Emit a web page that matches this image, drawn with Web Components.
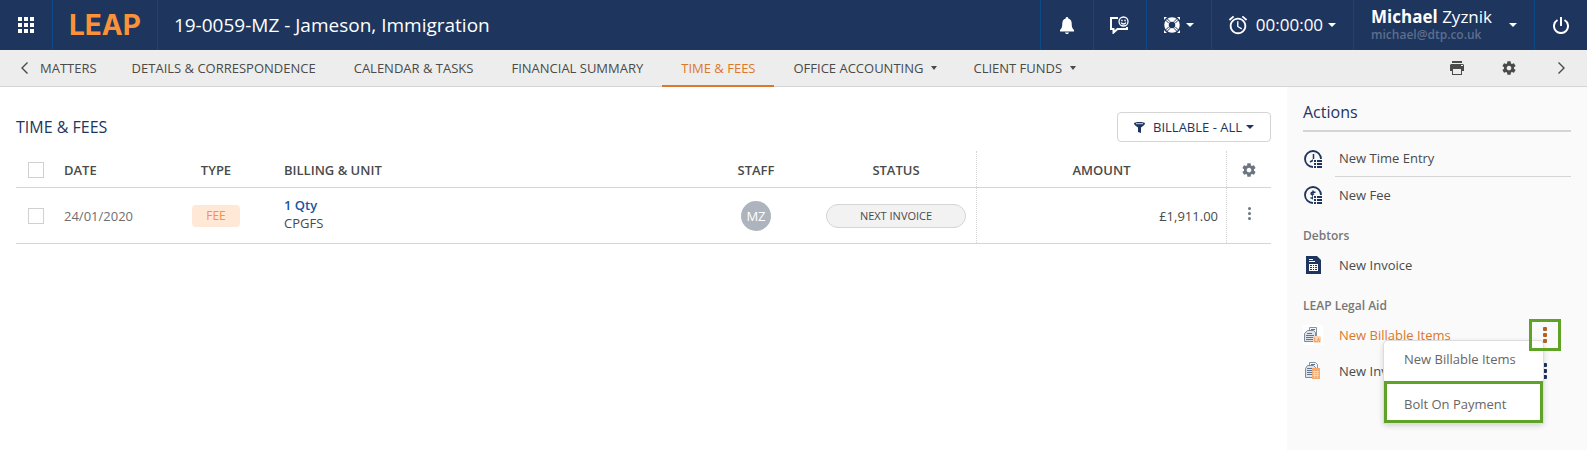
<!DOCTYPE html>
<html lang="en">
<head>
<meta charset="utf-8">
<title>19-0059-MZ - Jameson, Immigration</title>
<style>
:root {
  --navy: #1e355e;
  --orange: #dd772b;
  --line: #d5d5d5;
  --green: #5fa326;
  --text: #4a4a4a;
}

body {
  margin: 0;
  min-height: 100vh;
  display: flex;
  flex-direction: column;
  background: #fff;
  color: var(--text);
  font: 13px/20px "Open Sans", "Noto Sans", sans-serif;
}

.page {
  flex: 1;
  display: flex;
}

time-fees {
  flex: 1;
  min-width: 0;
}
</style>
</head>
<body>
<app-header matter="19-0059-MZ - Jameson, Immigration"></app-header>
<app-nav>
  <nav-tab>DETAILS &amp; CORRESPONDENCE</nav-tab>
  <nav-tab>CALENDAR &amp; TASKS</nav-tab>
  <nav-tab>FINANCIAL SUMMARY</nav-tab>
  <nav-tab active>TIME &amp; FEES</nav-tab>
  <nav-tab menu>OFFICE ACCOUNTING</nav-tab>
  <nav-tab menu>CLIENT FUNDS</nav-tab>
</app-nav>
<div class="page">
  <time-fees></time-fees>
  <actions-panel>
    <action-item icon="time" divider>New Time Entry</action-item>
    <action-item icon="fee">New Fee</action-item>
    <action-group>Debtors</action-group>
    <action-item icon="invoice">New Invoice</action-item>
    <action-group>LEAP Legal Aid</action-group>
    <action-item icon="aidItems" more active>New Billable Items
      <popup-menu slot="menu"></popup-menu>
    </action-item>
    <action-item icon="aidInvoice" more>New Invoice</action-item>
  </actions-panel>
</div>

<script>
const gear = `<path fill="currentColor" d="M19.43 12.98c.04-.32.07-.64.07-.98s-.03-.66-.07-.98l2.11-1.65c.19-.15.24-.42.12-.64l-2-3.46c-.12-.22-.39-.3-.61-.22l-2.49 1c-.52-.4-1.08-.73-1.69-.98l-.38-2.65C14.46 2.18 14.25 2 14 2h-4c-.25 0-.46.18-.49.42l-.38 2.65c-.61.25-1.17.59-1.69.98l-2.49-1c-.23-.09-.49 0-.61.22l-2 3.46c-.13.22-.07.49.12.64l2.11 1.65c-.04.32-.07.65-.07.98s.03.66.07.98l-2.11 1.65c-.19.15-.24.42-.12.64l2 3.46c.12.22.39.3.61.22l2.49-1c.52.4 1.08.73 1.69.98l.38 2.65c.03.24.24.42.49.42h4c.25 0 .46-.18.49-.42l.38-2.65c.61-.25 1.17-.59 1.69-.98l2.49 1c.23.09.49 0 .61-.22l2-3.46c.12-.22.07-.49-.12-.64l-2.11-1.65zM12 15.5c-1.93 0-3.5-1.57-3.5-3.5s1.57-3.5 3.5-3.5 3.5 1.57 3.5 3.5-1.57 3.5-3.5 3.5z"/>`;

// the little list in the corner of the time and fee icons
const list = `<path fill="#fafafa" d="M9 9h10v10H9z"/><path fill="currentColor" d="M10 10h2v2h-2zm3 0h5v2h-5zm-3 3h2v2h-2zm3 0h5v2h-5zm-3 3h2v2h-2zm3 0h5v2h-5z"/>`;

// name: [width, height, viewBox, markup]
const icons = {
  apps: [16, 16, "0 0 16 16", `<path fill="currentColor" d="M0 0h4v4H0zm6 0h4v4H6zm6 0h4v4h-4zM0 6h4v4H0zm6 0h4v4H6zm6 0h4v4h-4zM0 12h4v4H0zm6 0h4v4H6zm6 0h4v4h-4z"/>`],
  bell: [14, 17, "0 0 14 17", `<path fill="currentColor" d="M7 0c.8 0 1.3.6 1.3 1.4C10.7 2 11.700 4 11.700 6.500c0 3.500.6 5 2.300 6.500v1.500H0V13c1.700-1.500 2.300-3 2.300-6.500C2.300 4 3.300 2 5.700 1.400 5.700.6 6.200 0 7 0zM5 15.500h4C9 16.400 8.100 17 7 17s-2-.6-2-1.500z"/>`],
  chat: [19, 18, "0 0 19 18", `<path fill="none" stroke="currentColor" stroke-width="2" d="M8 2H1v11h2.500v3.500L7.500 13H17v-2"/><circle cx="13.500" cy="5.500" r="4.500" fill="none" stroke="currentColor" stroke-width="1.300"/><path fill="none" stroke="currentColor" stroke-width="1.300" d="M11.200 4.500h1.500M14.300 4.500h1.500M11.200 6.500c.8 2 3.800 2 4.600 0"/>`],
  help: [16, 16, "0 0 16 16", `<circle cx="8" cy="8" r="5.500" fill="none" stroke="currentColor" stroke-width="4.500"/><path stroke="#1e355e" stroke-width="1" d="M1.800 3.200l3 3M3.200 1.800l3 3M14.200 3.200l-3 3M12.800 1.800l-3 3M1.800 12.800l3-3M3.200 14.200l3-3M14.200 12.800l-3-3M12.800 14.200l-3-3"/><path fill="currentColor" d="M0 0h3L0 3zM16 0v3l-3-3zM0 16v-3l3 3zM16 16h-3l3-3z"/>`],
  alarm: [22, 22, "0 0 24 24", `<path fill="currentColor" d="M22 5.720l-4.600-3.860-1.290 1.530 4.600 3.860L22 5.720zM7.880 3.390L6.600 1.860 2 5.710l1.290 1.530 4.590-3.850zM12.500 8H11v6l4.750 2.850.75-1.230-4-2.370V8zM12 4c-4.970 0-9 4.030-9 9s4.020 9 9 9c4.970 0 9-4.030 9-9s-4.030-9-9-9zm0 16c-3.870 0-7-3.130-7-7s3.130-7 7-7 7 3.130 7 7-3.130 7-7 7z"/>`],
  power: [16, 17, "0 0 16 17", `<path fill="none" stroke="currentColor" stroke-width="2" d="M8 0v9M4.500 3A7 7 0 1 0 11.500 3"/>`],
  caret: [8, 4, "0 0 8 4", `<path fill="currentColor" d="M0 0h8L4 4z"/>`],
  smallCaret: [6, 4, "0 0 6 4", `<path fill="currentColor" d="M0 0h6L3 4z"/>`],
  back: [7, 12, "0 0 7 12", `<path fill="none" stroke="currentColor" stroke-width="1.400" d="M6.500.5L1 6l5.500 5.500"/>`],
  next: [7, 12, "0 0 7 12", `<path fill="none" stroke="currentColor" stroke-width="1.400" d="M.5.5L6 6 .5 11.500"/>`],
  print: [14, 14, "0 0 14 14", `<path fill="currentColor" d="M2 0h10v2H2zM1 3h12l1 1v6h-2V7H2v3H0V4zM2 7h10v7H2z"/><path fill="#ededed" d="M3 8h8v5H3zM11 4h2v1h-2z"/>`],
  gear: [16, 16, "0 0 24 24", gear],
  filter: [11, 11, "0 0 11 11", `<path fill="currentColor" d="M0 1.500C0 .5 2.500 0 5.500 0S11 .5 11 1.500c0 .8-1.500 2.500-4 4V11l-3-1V5.500C1.500 4 0 2.300 0 1.500z"/><path stroke="#fff" stroke-width=".8" d="M2 1.700h7"/>`],
  dots: [3, 13, "0 0 3 13", `<circle cx="1.500" cy="1.500" r="1.500" fill="currentColor"/><circle cx="1.500" cy="6.500" r="1.500" fill="currentColor"/><circle cx="1.500" cy="11.500" r="1.500" fill="currentColor"/>`],
  boldDots: [4, 16, "0 0 4 16", `<rect width="4" height="4" rx="1" fill="currentColor"/><rect y="6" width="4" height="4" rx="1" fill="currentColor"/><rect y="12" width="4" height="4" rx="1" fill="currentColor"/>`],
  time: [18, 18, "0 0 18 18", `<circle cx="9" cy="9" r="8" fill="none" stroke="currentColor" stroke-width="1.800"/><path fill="none" stroke="currentColor" stroke-width="1.500" d="M9.500 4v6L6 12"/>${list}`],
  fee: [18, 18, "0 0 18 18", `<circle cx="9" cy="9" r="8" fill="none" stroke="currentColor" stroke-width="1.800"/><path fill="none" stroke="currentColor" stroke-width="1.500" d="M11.500 6.200H8.700C6.500 6.200 6.500 9 8.700 9c2.500 0 2.500 3 .3 3H6.500M9 4.500v9"/>${list}`],
  invoice: [15, 18, "0 0 15 18", `<path fill="currentColor" d="M0 0h11l4 4v14H0z"/><path fill="#fafafa" d="M3 3h4v1H3zm0 2h6v1H3zM3 8h9v7H3z"/><path fill="currentColor" d="M4 9h2v1H4zm3 0h1v1H7zm2 0h2v1H9zm-5 2h2v1H4zm3 0h1v1H7zm2 0h2v1H9zm-5 2h2v1H4zm3 0h1v1H7zm2 0h2v1H9z"/>`],
  aidItems: [20, 20, "0 0 20 20", `<path fill="#fff" d="M0 0h20v20H0z"/><path fill="#f3f5f7" stroke="#8494aa" d="M6.500 2.500h7v12h-7z"/><path fill="#dfe4ea" stroke="#7a8ba3" d="M4.500 5.500h6l2 2v9h-11v-8z"/><path stroke="#60738f" d="M8 4.500h4M4 8.500h5M3 10.500h8M3 12.500h8M3 14.500h7"/><rect x="10" y="11" width="8" height="7" rx="2" fill="#fcd5b5"/><path fill="none" stroke="#f09a58" d="M11.700 12.500v4h2M14.500 17l1-4 1.200 4"/>`],
  aidInvoice: [20, 20, "0 0 20 20", `<path fill="#f3f5f7" stroke="#8494aa" d="M6.500 1.500h6l2 2v10h-8z"/><path fill="#dfe4ea" stroke="#7a8ba3" d="M4.500 4.500h6l2 2v10h-10v-9z"/><path stroke="#60738f" d="M8 3.500h4M4 7.500h6M4 9.500h5M4 11.500h5M4 13.500h5"/><path fill="#f5ac70" d="M9 7h8v11H9z"/><path stroke="#fde3cc" stroke-width=".7" d="M10 10.500h6M10 12.500h6M10 14.500h6M11.700 10v7M14.300 10v7"/>`]
};

class AppIcon extends HTMLElement {
  constructor() {
    super();
    this.attachShadow({ mode: "open" });
  }

  connectedCallback() {
    const [width, height, viewBox, markup] = icons[this.getAttribute("name")];
    this.shadowRoot.innerHTML = `
<style>
:host { display: inline-flex; flex: none; }
svg { display: block; }
</style>
<svg width="${width}" height="${height}" viewBox="${viewBox}" aria-hidden="true">${markup}</svg>`;
  }
}

class AppHeader extends HTMLElement {
  constructor() {
    super();
    this.attachShadow({ mode: "open" });
  }

  connectedCallback() {
    this.shadowRoot.innerHTML = `
<style>
:host {
  display: flex;
  height: 50px;
  background: var(--navy);
  color: #fff;
}

button, a, h1 {
  margin: 0;
  padding: 0 16px;
  display: flex;
  align-items: center;
  justify-content: center;
  border: 0;
  background: none;
  color: inherit;
  font: inherit;
  text-decoration: none;
}

h1 {
  flex: 1;
  justify-content: flex-start;
  font-size: 19px;
  white-space: nowrap;
}

button { border-left: 1px solid #0b4a87; }
.apps { border: 0; padding: 0 18px; }

.logo {
  border: solid #0b4a87;
  border-width: 0 1px;
  color: #fb923a;
  font: 700 28px/28px Inter, sans-serif;
}

.icon { min-width: 53px; padding: 0; }
.help { min-width: 65px; padding: 0; gap: 6px; }
.timer { padding: 0 17px 0 15px; gap: 5px; font-size: 17px; }
.timer app-icon:first-child { margin-right: 2px; }
.user { padding: 0 17px; gap: 17px; text-align: left; }
.name { display: block; font-size: 17px; line-height: 20px; }
.mail { display: block; color: #5d6e8c; font-size: 12px; font-weight: 600; line-height: 16px; }
</style>
<button class="apps" aria-label="Apps"><app-icon name="apps"></app-icon></button>
<a class="logo" href="#">LEAP</a>
<h1></h1>
<button class="icon" aria-label="Notifications"><app-icon name="bell"></app-icon></button>
<button class="icon" aria-label="Feedback"><app-icon name="chat"></app-icon></button>
<button class="help" aria-label="Help"><app-icon name="help"></app-icon><app-icon name="caret"></app-icon></button>
<button class="timer"><app-icon name="alarm"></app-icon>00:00:00<app-icon name="caret"></app-icon></button>
<button class="user">
  <span><span class="name"><b>Michael</b> Zyznik</span><span class="mail">michael@dtp.co.uk</span></span>
  <app-icon name="caret"></app-icon>
</button>
<button class="icon" aria-label="Log out"><app-icon name="power"></app-icon></button>`;
    this.shadowRoot.querySelector("h1").textContent = this.getAttribute("matter");
  }
}

class AppNav extends HTMLElement {
  constructor() {
    super();
    this.attachShadow({ mode: "open" }).innerHTML = `
<style>
:host {
  display: flex;
  height: 36px;
  border-bottom: 1px solid var(--line);
  background: #ededed;
}

nav { flex: 1; display: flex; }

.back {
  display: flex;
  align-items: center;
  gap: 12px;
  padding: 0 16px 0 21px;
  color: inherit;
  font-weight: 500;
  text-decoration: none;
}

.tools { display: flex; padding-right: 8px; }

button {
  width: 36px;
  margin-left: 16px;
  padding: 0;
  display: flex;
  align-items: center;
  justify-content: center;
  border: 0;
  background: none;
  color: inherit;
}
</style>
<nav>
  <a class="back" href="#"><app-icon name="back"></app-icon>MATTERS</a>
  <slot></slot>
</nav>
<div class="tools">
  <button aria-label="Print"><app-icon name="print"></app-icon></button>
  <button aria-label="Settings"><app-icon name="gear"></app-icon></button>
  <button aria-label="Next"><app-icon name="next"></app-icon></button>
</div>`;
  }
}

class NavTab extends HTMLElement {
  constructor() {
    super();
    this.attachShadow({ mode: "open" });
  }

  connectedCallback() {
    this.shadowRoot.innerHTML = `
<style>
:host { display: flex; margin-bottom: -1px; }

a {
  display: flex;
  align-items: center;
  gap: 8px;
  padding: 0 19px;
  border-bottom: 2px solid transparent;
  color: inherit;
  font-weight: 500;
  text-decoration: none;
  white-space: nowrap;
}

:host([menu]) a { padding-right: 17px; }

:host([active]) a {
  border-color: var(--orange);
  color: var(--orange);
}
</style>
<a href="#"><slot></slot>${this.hasAttribute("menu") ? '<app-icon name="smallCaret"></app-icon>' : ""}</a>`;
  }
}

class TimeFees extends HTMLElement {
  constructor() {
    super();
    this.attachShadow({ mode: "open" }).innerHTML = `
<style>
:host { display: block; padding: 25px 16px; box-sizing: border-box; }

header {
  display: flex;
  align-items: center;
  justify-content: space-between;
  margin-bottom: 9px;
}

h2 {
  margin: 0;
  color: var(--navy);
  font-size: 16px;
  font-weight: 400;
}

.filter {
  display: flex;
  align-items: center;
  gap: 4px;
  height: 30px;
  padding: 0 16px;
  border: 1px solid var(--line);
  border-radius: 4px;
  background: #fff;
  color: var(--navy);
  font: 500 13px/20px "Open Sans", sans-serif;
}

.filter app-icon:first-child { margin-right: 4px; }

table {
  width: 100%;
  table-layout: fixed;
  border-collapse: collapse;
}

th, td {
  padding: 0 8px;
  border-bottom: 1px solid var(--line);
  text-align: center;
}

th { height: 34px; padding-top: 2px; font-weight: 600; }
td { height: 55px; }
.left { text-align: left; }
.check { width: 24px; }
.date { width: 84px; }
.type, .staff { width: 104px; }
.status { width: 144px; }
.amount { width: 233px; border-left: 1px dotted var(--line); }
.tools { width: 28px; border-left: 1px dotted var(--line); color: #6c7580; }
td.amount { text-align: right; }
td.date { color: #6f6f6f; }
td.entry, td.tools { height: 51px; padding-bottom: 4px; }

input {
  appearance: none;
  display: block;
  width: 16px;
  height: 16px;
  margin: 0 auto;
  border: 1px solid #d0d0d0;
  background: #fff;
}

.fee {
  display: block;
  width: 48px;
  margin: auto;
  border-radius: 4px;
  background: #ffe8d6;
  color: #fb923a;
  font-size: 12px;
  line-height: 22px;
}

td a {
  display: block;
  color: #1556a5;
  font-weight: 600;
  text-decoration: none;
  line-height: 18px;
}

td span { display: block; line-height: 18px; }

.avatar {
  width: 30px;
  margin: auto;
  border-radius: 50%;
  background: #adb4bd;
  color: #fff;
  line-height: 30px;
}

.pill {
  margin: auto;
  width: 138px;
  border: 1px solid var(--line);
  border-radius: 12px;
  background: #f2f2f2;
  font-size: 11px;
  line-height: 22px;
}

table button {
  display: flex;
  justify-content: center;
  width: 100%;
  padding: 0;
  border: 0;
  background: none;
  color: inherit;
}
</style>
<header>
  <h2>TIME &amp; FEES</h2>
  <button class="filter"><app-icon name="filter"></app-icon>BILLABLE - ALL<app-icon name="caret"></app-icon></button>
</header>
<table>
  <thead>
    <tr>
      <th class="check"><input type="checkbox" aria-label="Select all"></th>
      <th class="date left">DATE</th>
      <th class="type">TYPE</th>
      <th class="left">BILLING &amp; UNIT</th>
      <th class="staff">STAFF</th>
      <th class="status">STATUS</th>
      <th class="amount">AMOUNT</th>
      <th class="tools"><button aria-label="Columns"><app-icon name="gear"></app-icon></button></th>
    </tr>
  </thead>
  <tbody>
    <tr>
      <td><input type="checkbox" aria-label="Select entry"></td>
      <td class="date left">24/01/2020</td>
      <td><span class="fee">FEE</span></td>
      <td class="entry left"><a href="#">1 Qty</a><span>CPGFS</span></td>
      <td><span class="avatar">MZ</span></td>
      <td><span class="pill">NEXT INVOICE</span></td>
      <td class="amount">£1,911.00</td>
      <td class="tools"><button aria-label="More"><app-icon name="dots"></app-icon></button></td>
    </tr>
  </tbody>
</table>`;
  }
}

class ActionsPanel extends HTMLElement {
  constructor() {
    super();
    this.attachShadow({ mode: "open" }).innerHTML = `
<style>
:host {
  display: block;
  box-sizing: border-box;
  width: 300px;
  padding: 0 16px;
  background: #fafafa;
}

h2 {
  margin: 0 0 8px;
  padding: 13px 0 6px;
  border-bottom: 2px solid var(--line);
  color: var(--navy);
  font-size: 16px;
  font-weight: 400;
  line-height: 24px;
}
</style>
<h2>Actions</h2>
<slot></slot>`;
  }
}

class ActionGroup extends HTMLElement {
  constructor() {
    super();
    this.attachShadow({ mode: "open" }).innerHTML = `
<style>
:host { display: block; margin: 13px 0 1px; color: #777; font-size: 12px; font-weight: 600; }
</style>
<slot></slot>`;
  }
}

class ActionItem extends HTMLElement {
  constructor() {
    super();
    this.attachShadow({ mode: "open" });
  }

  connectedCallback() {
    this.shadowRoot.innerHTML = `
<style>
:host {
  position: relative;
  display: grid;
  grid-template-columns: 32px 1fr auto;
  align-items: center;
}

app-icon { color: var(--navy); }
.icon { justify-content: center; width: 20px; }

a {
  padding: 8px 4px;
  color: inherit;
  text-decoration: none;
}

:host([divider]) a { border-bottom: 1px solid var(--line); }
:host([active]) a { color: var(--orange); }

button {
  width: 32px;
  height: 32px;
  margin-right: 10px;
  padding: 0;
  display: flex;
  align-items: center;
  justify-content: center;
  border: 3px solid transparent;
  background: none;
}

:host([active]) button { z-index: 2; border-color: var(--green); }
:host([active]) button app-icon { color: #b5601c; }
:host([active]) { z-index: 1; }
</style>
<app-icon class="icon" name="${this.getAttribute("icon")}"></app-icon>
<a href="#"><slot></slot></a>
${this.hasAttribute("more") ? '<button aria-label="More"><app-icon name="boldDots"></app-icon></button>' : ""}
<slot name="menu"></slot>`;
  }
}

class PopupMenu extends HTMLElement {
  constructor() {
    super();
    this.attachShadow({ mode: "open" }).innerHTML = `
<style>
:host {
  position: absolute;
  z-index: 1;
  top: 24px;
  right: 28px;
  width: 159px;
  border-radius: 4px 4px 0 0;
  background: #fff;
  box-shadow: 0 0 0 1px #ddd, 0 2px 6px #0003;
}

button {
  display: block;
  box-sizing: border-box;
  width: 100%;
  padding: 8px 0 12px 20px;
  border: 0;
  background: none;
  color: #666;
  font: inherit;
  text-align: left;
  white-space: nowrap;
}

.marked {
  padding: 10px 0 6px 17px;
  border: 3px solid var(--green);
}
</style>
<button>New Billable Items</button>
<button class="marked">Bolt On Payment</button>`;
  }
}

customElements.define("app-icon", AppIcon);
customElements.define("app-header", AppHeader);
customElements.define("app-nav", AppNav);
customElements.define("nav-tab", NavTab);
customElements.define("time-fees", TimeFees);
customElements.define("actions-panel", ActionsPanel);
customElements.define("action-group", ActionGroup);
customElements.define("action-item", ActionItem);
customElements.define("popup-menu", PopupMenu);
</script>
</body>
</html>
